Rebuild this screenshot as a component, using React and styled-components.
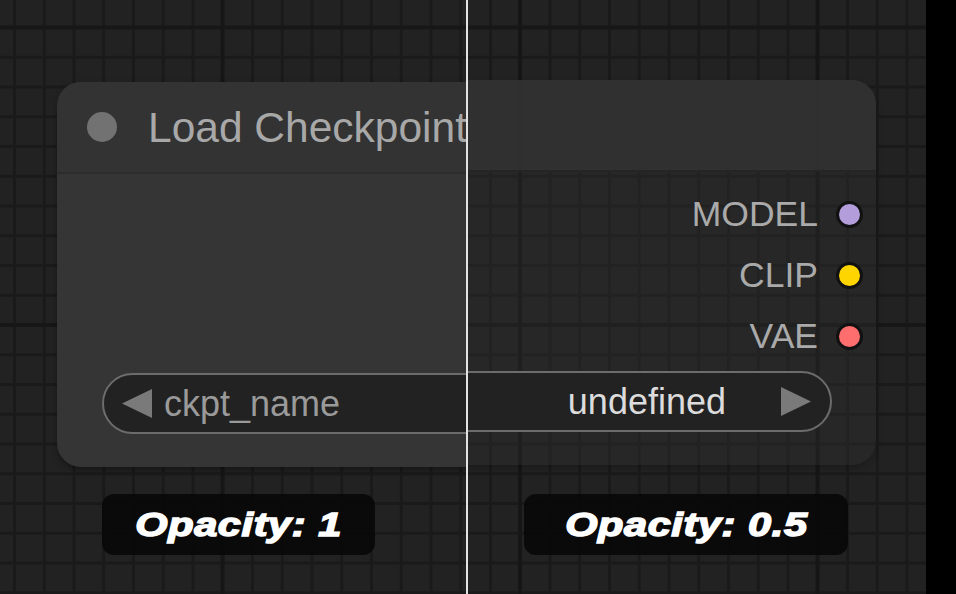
import React from 'react';
import styled, { createGlobalStyle } from 'styled-components';

const GlobalStyle = createGlobalStyle`
  html, body {
    margin: 0;
    padding: 0;
    background: #000;
  }
  body {
    font-family: "Liberation Sans", Arial, sans-serif;
  }
`;

const outputs = [
  { name: 'MODEL', color: '#b39ddb' },
  { name: 'CLIP', color: '#ffd500' },
  { name: 'VAE', color: '#ff6e6e' },
];

const LoadCheckpoint = ({ faded }) => (
  <Node $faded={faded}>
    <TitleBar $faded={faded}>
      <TitleDot />
      <TitleText>Load Checkpoint</TitleText>
    </TitleBar>
    <Body>
      <OutputList>
        {outputs.map((o) => (
          <OutputRow key={o.name}>
            <OutputLabel>{o.name}</OutputLabel>
            <Slot $color={o.color} />
          </OutputRow>
        ))}
      </OutputList>
      <ComboWidget>
        <Arrow viewBox="0 0 30 29">
          <polygon points="30,0 30,29 0,14.5" />
        </Arrow>
        <WidgetName>ckpt_name</WidgetName>
        <WidgetValue>undefined</WidgetValue>
        <Arrow viewBox="0 0 30 29">
          <polygon points="0,0 0,29 30,14.5" />
        </Arrow>
      </ComboWidget>
    </Body>
  </Node>
);

export default function App() {
  return (
    <>
      <GlobalStyle />
      <Stage>
        <Canvas>
          <Pane $width={466} $captionLeft={102}>
            <NodeSlot $x={57} $y={82}>
              <LoadCheckpoint />
            </NodeSlot>
            <Caption $width={273}>
              <CaptionText>Opacity: 1</CaptionText>
            </Caption>
          </Pane>
          <Divider />
          <Pane $width={458} $captionLeft={56}>
            <NodeSlot $x={-411} $y={80}>
              <LoadCheckpoint faded />
            </NodeSlot>
            <Caption $width={324}>
              <CaptionText>Opacity: 0.5</CaptionText>
            </Caption>
          </Pane>
        </Canvas>
        <Gutter />
      </Stage>
    </>
  );
}

const Stage = styled.div`
  display: flex;
  width: 956px;
  height: 594px;
  overflow: hidden;
`;

/* litegraph style grid: fine lines every ~30px, heavier ones every 10 cells */
const Canvas = styled.div`
  display: flex;
  width: 926px;
  height: 594px;
  background-color: #222;
  background-image:
    linear-gradient(90deg, #161616 4px, transparent 4px),
    linear-gradient(180deg, #171717 4px, transparent 4px),
    linear-gradient(90deg, #1a1a1a 3px, transparent 3px),
    linear-gradient(180deg, #1a1a1a 3px, transparent 3px);
  background-size:
    297.5px 100%,
    100% 297.5px,
    29.75px 100%,
    100% 29.75px;
  background-position:
    220.5px 0,
    0 25.5px,
    13px 0,
    0 26px;
`;

const Gutter = styled.div`
  flex: 1;
  background: #000;
`;

const Pane = styled.div`
  position: relative;
  flex: none;
  width: ${({ $width }) => $width}px;
  height: 100%;
  overflow: hidden;
  display: flex;
  flex-direction: column;
  justify-content: flex-end;
  padding: 0 0 39px ${({ $captionLeft }) => $captionLeft}px;
  box-sizing: border-box;
`;

const Divider = styled.div`
  flex: none;
  width: 2px;
  height: 100%;
  background: #e2e2e2;
  position: relative;
  z-index: 2;
`;

const NodeSlot = styled.div`
  position: absolute;
  left: ${({ $x }) => $x}px;
  top: ${({ $y }) => $y}px;
`;

const Node = styled.div`
  width: 819px;
  height: 385px;
  border-radius: 24px;
  background: ${({ $faded }) => ($faded ? 'rgba(53, 53, 53, 0.3)' : '#353535')};
  box-shadow: 0 3px 6px rgba(0, 0, 0, ${({ $faded }) => ($faded ? 0.2 : 0.35)});
  overflow: hidden;
  display: flex;
  flex-direction: column;
`;

const TitleBar = styled.div`
  height: 90px;
  flex: none;
  display: flex;
  align-items: center;
  gap: 31px;
  padding-left: 30px;
  background: ${({ $faded }) => ($faded ? 'rgba(51, 51, 51, 0.85)' : '#333')};
  border-bottom: 2px solid ${({ $faded }) => ($faded ? 'rgba(30, 30, 30, 0.6)' : '#2c2c2c')};
`;

const TitleDot = styled.span`
  width: 30px;
  height: 30px;
  border-radius: 50%;
  background: #727272;
`;

const TitleText = styled.span`
  font-size: 42.5px;
  color: #a8a8a8;
  white-space: nowrap;
  margin-top: 1px;
`;

const Body = styled.div`
  display: flex;
  flex-direction: column;
`;

const OutputList = styled.div`
  display: flex;
  flex-direction: column;
  align-items: flex-end;
  padding: 12px 13px 0 0;
`;

const OutputRow = styled.div`
  height: 61px;
  display: flex;
  align-items: center;
  gap: 18px;
`;

const OutputLabel = styled.span`
  font-size: 35.5px;
  color: #aaa;
`;

const Slot = styled.span`
  width: 21px;
  height: 21px;
  border-radius: 50%;
  background: ${({ $color }) => $color};
  border: 3px solid #111;
`;

const ComboWidget = styled.div`
  height: 57px;
  margin: 4px 44px 0 45px;
  border: 2px solid #6c6c6c;
  border-radius: 31px;
  background: #222;
  display: flex;
  align-items: center;
  padding: 0 19px 0 18px;
  gap: 12px;
  font-size: 36px;
`;

const Arrow = styled.svg`
  width: 30px;
  height: 29px;
  flex: none;
  fill: #7a7a7a;
`;

const WidgetName = styled.span`
  color: #9a9a9a;
`;

const WidgetValue = styled.span`
  margin-left: auto;
  margin-right: 43px;
  color: #dcdcdc;
`;

const Caption = styled.div`
  position: relative;
  z-index: 1;
  width: ${({ $width }) => $width}px;
  height: 61px;
  border-radius: 12px;
  background: rgba(8, 8, 8, 0.9);
  display: flex;
  align-items: center;
  justify-content: center;
`;

const CaptionText = styled.span`
  display: inline-block;
  font-family: "Liberation Sans", Arial, sans-serif;
  font-size: 34px;
  font-weight: 700;
  font-style: italic;
  color: #fff;
  -webkit-text-stroke: 1.5px #fff;
  transform: scaleX(1.22);
  white-space: nowrap;
  letter-spacing: 0.5px;
`;
